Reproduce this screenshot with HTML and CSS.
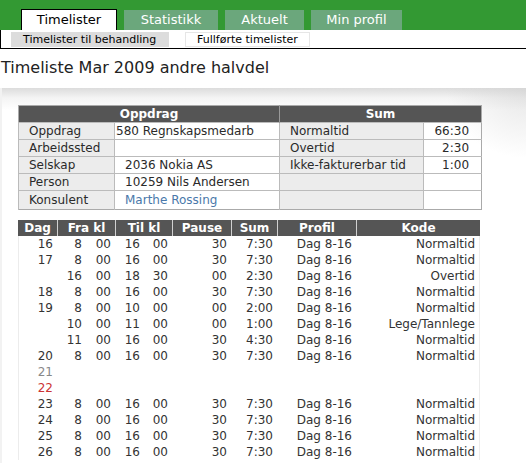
FILE: index.html
```html
<!DOCTYPE html>
<html lang="no">
<head>
<meta charset="utf-8">
<title>Timeliste</title>
<link rel="stylesheet" href="styles.css">
</head>
<body>
<div class="topbar">
  <div class="tab active t1">Timelister</div>
  <div class="tab t2">Statistikk</div>
  <div class="tab t3">Aktuelt</div>
  <div class="tab t4">Min profil</div>
</div>
<div class="subnav">
  <span class="sub active">Timelister til behandling</span>
  <span class="sub">Fullførte timelister</span>
</div>
<h1 class="title">Timeliste Mar 2009 andre halvdel</h1>
<div class="panel">
  <table class="summary">
    <colgroup><col class="c1"><col class="c2"><col class="c3"><col class="c4"></colgroup>
    <thead>
      <tr><th colspan="2">Oppdrag</th><th colspan="2" class="sep">Sum</th></tr>
    </thead>
    <tbody>
      <tr><td class="lbl">Oppdrag</td><td class="val first">580 Regnskapsmedarb</td><td class="lbl">Normaltid</td><td class="num">66:30</td></tr>
      <tr><td class="lbl">Arbeidssted</td><td class="val"></td><td class="lbl">Overtid</td><td class="num">2:30</td></tr>
      <tr><td class="lbl">Selskap</td><td class="val">2036 Nokia AS</td><td class="lbl">Ikke-fakturerbar tid</td><td class="num">1:00</td></tr>
      <tr><td class="lbl">Person</td><td class="val">10259 Nils Andersen</td><td class="lbl"></td><td class="num"></td></tr>
      <tr class="last"><td class="lbl">Konsulent</td><td class="val"><a class="link" href="#">Marthe Rossing</a></td><td class="lbl"></td><td class="num"></td></tr>
    </tbody>
  </table>

  <table class="days">
    <colgroup>
      <col class="d-dag"><col class="d-fh"><col class="d-fm"><col class="d-th"><col class="d-tm"><col class="d-pause"><col class="d-sum"><col class="d-profil"><col class="d-kode">
    </colgroup>
    <thead>
      <tr><th>Dag</th><th colspan="2">Fra kl</th><th colspan="2">Til kl</th><th>Pause</th><th>Sum</th><th>Profil</th><th>Kode</th></tr>
    </thead>
    <tbody>
      <tr><td>16</td><td>8</td><td>00</td><td>16</td><td>00</td><td>30</td><td>7:30</td><td>Dag 8-16</td><td>Normaltid</td></tr>
      <tr><td>17</td><td>8</td><td>00</td><td>16</td><td>00</td><td>30</td><td>7:30</td><td>Dag 8-16</td><td>Normaltid</td></tr>
      <tr><td></td><td>16</td><td>00</td><td>18</td><td>30</td><td>00</td><td>2:30</td><td>Dag 8-16</td><td>Overtid</td></tr>
      <tr><td>18</td><td>8</td><td>00</td><td>16</td><td>00</td><td>30</td><td>7:30</td><td>Dag 8-16</td><td>Normaltid</td></tr>
      <tr><td>19</td><td>8</td><td>00</td><td>10</td><td>00</td><td>00</td><td>2:00</td><td>Dag 8-16</td><td>Normaltid</td></tr>
      <tr><td></td><td>10</td><td>00</td><td>11</td><td>00</td><td>00</td><td>1:00</td><td>Dag 8-16</td><td>Lege/Tannlege</td></tr>
      <tr><td></td><td>11</td><td>00</td><td>16</td><td>00</td><td>30</td><td>4:30</td><td>Dag 8-16</td><td>Normaltid</td></tr>
      <tr><td>20</td><td>8</td><td>00</td><td>16</td><td>00</td><td>30</td><td>7:30</td><td>Dag 8-16</td><td>Normaltid</td></tr>
      <tr><td class="sat">21</td><td></td><td></td><td></td><td></td><td></td><td></td><td></td><td></td></tr>
      <tr><td class="sun">22</td><td></td><td></td><td></td><td></td><td></td><td></td><td></td><td></td></tr>
      <tr><td>23</td><td>8</td><td>00</td><td>16</td><td>00</td><td>30</td><td>7:30</td><td>Dag 8-16</td><td>Normaltid</td></tr>
      <tr><td>24</td><td>8</td><td>00</td><td>16</td><td>00</td><td>30</td><td>7:30</td><td>Dag 8-16</td><td>Normaltid</td></tr>
      <tr><td>25</td><td>8</td><td>00</td><td>16</td><td>00</td><td>30</td><td>7:30</td><td>Dag 8-16</td><td>Normaltid</td></tr>
      <tr><td>26</td><td>8</td><td>00</td><td>16</td><td>00</td><td>30</td><td>7:30</td><td>Dag 8-16</td><td>Normaltid</td></tr>
    </tbody>
  </table>
</div>
</body>
</html>
```

FILE: styles.css
```css
html, body {
  margin: 0;
  padding: 0;
  background: #fff;
}
body {
  font-family: "DejaVu Sans", Verdana, sans-serif;
  font-size: 12px;
  color: #333;
  overflow: hidden;
}

/* top tabs */
.topbar {
  height: 30px;
  background: #339933;
  display: flex;
  align-items: flex-end;
  gap: 7px;
  padding-left: 21px;
}
.tab {
  height: 20px;
  line-height: 20px;
  font-size: 13px;
  color: #fff;
  background: #6ba77c;
  text-align: center;
  box-sizing: border-box;
}
.tab.active {
  height: 21px;
  background: #fff;
  color: #000;
  border: 1px solid #000;
  border-bottom: 0;
}
.t1 { width: 96px; }
.t2 { width: 94px; }
.t3 { width: 79px; }
.t4 { width: 91px; }

/* sub navigation */
.subnav {
  height: 19px;
  border-left: 1px solid #000;
  border-bottom: 1px solid #000;
  display: flex;
  align-items: flex-end;
  gap: 16px;
  padding-left: 10px;
  padding-bottom: 1px;
  box-sizing: border-box;
}
.sub {
  height: 15px;
  line-height: 13px;
  font-size: 11px;
  color: #000;
  padding: 0 11px;
  box-sizing: border-box;
  border: 1px solid #e6e6e6;
}
.sub.active {
  background: #dcdcdc;
  border-color: #dcdcdc;
  width: 158px;
}

/* title */
.title {
  margin: 9px 0 0 0;
  height: 20px;
  line-height: 20px;
  font-size: 16px;
  font-weight: normal;
  color: #222;
  padding-left: 1px;
}

/* panel */
.panel {
  margin-top: 10px;
  padding: 17px 0 0 16px;
  border-left: 2px solid #f2f2f2;
  background:
    radial-gradient(ellipse 80px 70px at 100% 0%, rgba(210,210,210,0.55), rgba(255,255,255,0) 100%),
    linear-gradient(to bottom, #dcdcdc 0px, #f4f4f4 10px, #ffffff 22px);
  height: 358px;
}

/* summary table */
.summary {
  border-collapse: collapse;
  table-layout: fixed;
  width: 463px;
  border: 1px solid #aaa;
}
.summary .c1 { width: 96px; }
.summary .c2 { width: 165px; }
.summary .c3 { width: 144px; }
.summary .c4 { width: 58px; }
.summary th {
  background: #555;
  color: #fff;
  font-weight: bold;
  height: 16px;
  line-height: 16px;
  padding: 0;
  text-align: center;
}
.summary th.sep { border-left: 1px solid #999; }
.summary td {
  height: 16px;
  line-height: 16px;
  padding: 0 10px;
  border-top: 1px solid #bbb;
  border-left: 1px solid #bbb;
  color: #2a2a2a;
  white-space: nowrap;
  overflow: hidden;
}
.summary tr.last td { height: 18px; }
.summary td.lbl { background: #ececec; }
.summary td.val.first { padding-left: 1px; }
.summary td.num { text-align: right; padding-right: 12px; }
.link { color: #4a78aa; text-decoration: none; }

/* days table */
.days {
  margin-top: 10px;
  border-collapse: separate;
  border-spacing: 0;
  table-layout: fixed;
  width: 462px;
}
.d-dag { width: 39px; }
.d-fh { width: 29px; }
.d-fm { width: 29px; }
.d-th { width: 29px; }
.d-tm { width: 28px; }
.d-pause { width: 59px; }
.d-sum { width: 46px; }
.d-profil { width: 79px; }
.d-kode { width: 124px; }
.days th {
  background: #555;
  color: #fff;
  font-weight: bold;
  height: 16px;
  line-height: 16px;
  padding: 0;
  text-align: center;
  border-left: 1px solid #d0d0d0;
}
.days th:first-child { border-left: 0; }
.days td {
  height: 16px;
  line-height: 16px;
  padding: 0 4px 0 0;
  text-align: right;
  white-space: nowrap;
  color: #333;
}
.days td:first-child { border-left: 1px solid #ececec; }
.days td:last-child { border-right: 1px solid #ececec; }
.days td.sat { color: #888; }
.days td.sun { color: #cc3333; }
```
